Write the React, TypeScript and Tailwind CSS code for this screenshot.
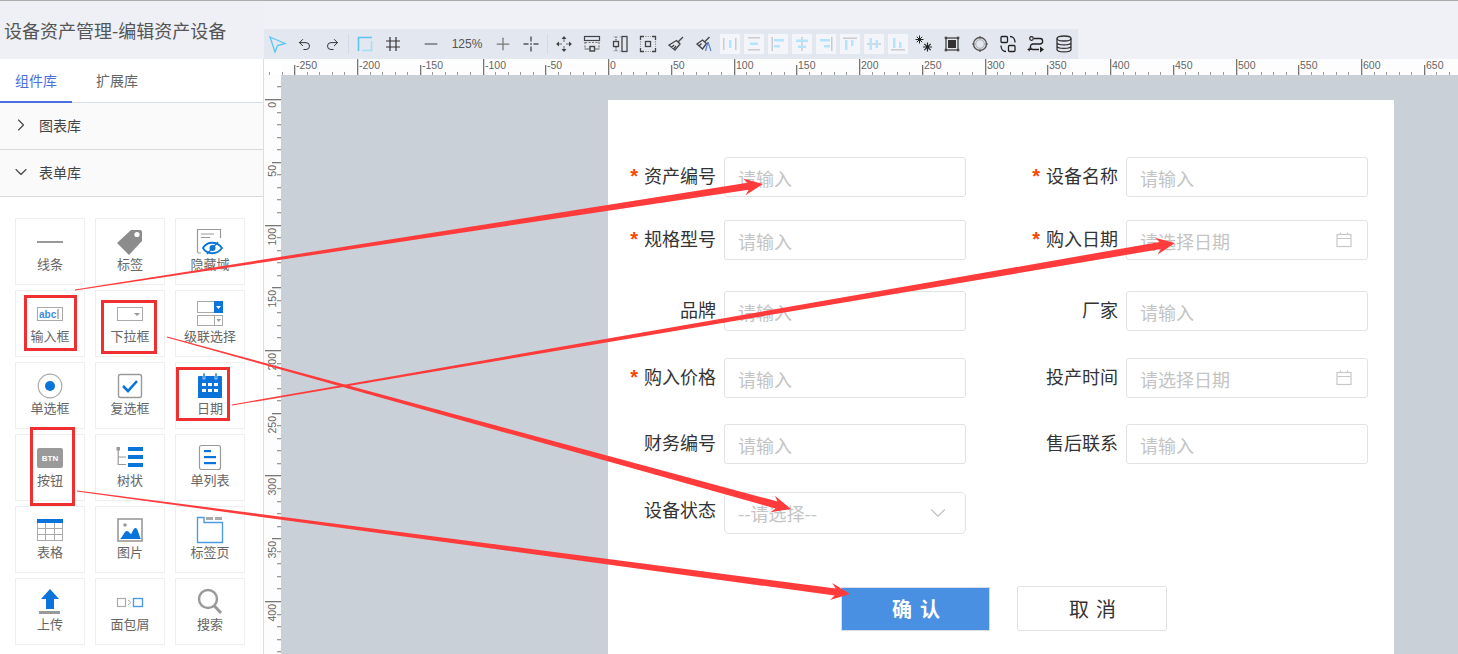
import type { ReactNode } from 'react'
import { ChevronDown, ChevronRight, Minus, Plus, Redo2, Undo2 } from 'lucide-react'

const FONT = '"Noto Sans CJK SC", "Liberation Sans", sans-serif'

function Tool({ children }: { children: ReactNode }) {
  return (
    <div className="w-7 h-full flex items-center justify-center shrink-0">
      <svg width="20" height="20" viewBox="0 0 20 20" fill="none" stroke="#444" strokeWidth="1.2">
        {children}
      </svg>
    </div>
  )
}

function Align({ children }: { children: ReactNode }) {
  return (
    <div className="w-6 h-full flex items-center justify-center shrink-0">
      <div className="w-5 h-5 bg-[#f3f5fa]">
        <svg width="20" height="20" viewBox="0 0 20 20">
          {children}
        </svg>
      </div>
    </div>
  )
}

function Sep() {
  return (
    <div className="w-[5px] h-full flex items-center justify-center shrink-0">
      <div className="w-px h-5 bg-[#d5d9e3]" />
    </div>
  )
}

function Toolbar() {
  const gray = '#ccc'
  const cyan = '#b5e5fb'
  return (
    <div className="w-[814px] h-[30px] bg-[#e3e7f0] flex items-center">
      <div className="w-[26px] h-full flex items-center justify-center shrink-0">
        <svg width="20" height="20" viewBox="0 0 20 20" fill="none">
          <path d="M3 3 L18 9.5 L10.5 11.5 L8 18 Z" stroke="#58c6f5" strokeWidth="1.3" />
        </svg>
      </div>
      <div className="w-7 h-full flex items-center justify-center shrink-0">
        <Undo2 size={15} color="#333" strokeWidth={1.6} />
      </div>
      <div className="w-7 h-full flex items-center justify-center shrink-0">
        <Redo2 size={15} color="#333" strokeWidth={1.6} />
      </div>
      <Sep />
      <Tool>
        <path d="M17 3.5 H3.5 V17" stroke="#5cc3f3" strokeWidth="1.6" />
        <path d="M16.5 7 V16.5 H7" stroke="#a5dcf7" strokeWidth="1.6" />
      </Tool>
      <Tool>
        <path d="M7 3 V17 M13 3 V17 M3 7 H17 M3 13 H17" stroke="#333" />
      </Tool>
      <div className="w-2.5 h-full shrink-0" />
      <div className="w-7 h-full flex items-center justify-center shrink-0">
        <Minus size={20} color="#777" strokeWidth={1.8} />
      </div>
      <div className="w-11 h-full flex items-center justify-center shrink-0 text-[12px] text-[#555] font-['Liberation_Sans']">125%</div>
      <div className="w-7 h-full flex items-center justify-center shrink-0">
        <Plus size={20} color="#777" strokeWidth={1.5} />
      </div>
      <Tool>
        <path d="M10 2.5 V7.5 M10 12.5 V17.5 M2.5 10 H7.5 M12.5 10 H17.5" stroke="#555" strokeWidth="1.4" />
        <rect x="9.2" y="9.2" width="1.6" height="1.6" fill="#555" stroke="none" />
      </Tool>
      <Sep />
      <Tool>
        <path d="M10 5 V8 M10 12 V15 M5 10 H8 M12 10 H15" stroke="#666" strokeWidth="1" />
        <path d="M10 2 L12.5 5 H7.5 Z M10 18 L12.5 15 H7.5 Z M2 10 L5 7.5 V12.5 Z M18 10 L15 7.5 V12.5 Z" fill="#444" stroke="none" />
      </Tool>
      <Tool>
        <rect x="2.5" y="2.5" width="15" height="4" />
        <path d="M3 8 V15 M17 8 V15 M3 8.5 H17" strokeDasharray="2 1.5" stroke="#777" />
        <rect x="8" y="12.5" width="4.5" height="4.5" strokeWidth="1.4" />
        <path d="M2.5 15 H8 M12 15 H17.5" stroke="#666" />
      </Tool>
      <Tool>
        <rect x="12" y="2.5" width="5" height="15" strokeWidth="1.3" />
        <rect x="3.5" y="7.5" width="5" height="5" strokeWidth="1.3" />
        <path d="M6 2.5 V7 M6 13 V17.5" strokeDasharray="1.5 1" stroke="#555" />
        <path d="M3.5 3 H11 M3.5 17 H11" strokeDasharray="1.5 1.5" stroke="#aaa" />
      </Tool>
      <Tool>
        <path d="M2.5 6 V2.5 H6 M14 2.5 H17.5 V6 M2.5 14 V17.5 H6 M14 17.5 H17.5 V14" strokeWidth="1.3" />
        <rect x="7.5" y="7.5" width="5" height="5" strokeWidth="1.3" />
        <path d="M7 2.5 H13 M7 17.5 H13 M2.5 7 V13 M17.5 7 V13" strokeDasharray="1.5 1" stroke="#999" />
      </Tool>
      <Tool>
        <path d="M17 3 L12 8 L14 9.5 M10.5 6.5 L14 10 L9 16 L3 11 Z M5.5 13.5 L8 11 M7.5 15 L10 12" stroke="#444" strokeWidth="1.3" />
      </Tool>
      <Tool>
        <path d="M15.5 3 L11 7.5 M8.5 6 L12.5 9.5 L8.5 15 L3 10 Z M5 12 L7.5 9.5" stroke="#444" strokeWidth="1.3" />
        <path d="M14 8 L11.5 17 M14 8 L17 17" stroke="#5a82e0" strokeWidth="1.2" />
      </Tool>
      <Align>
        <rect x="3" y="4" width="1.5" height="12" fill={gray} />
        <rect x="9" y="6" width="2.5" height="8" fill={cyan} />
        <rect x="15" y="4" width="1.5" height="12" fill={gray} />
      </Align>
      <Align>
        <rect x="4" y="3" width="12" height="1.5" fill={gray} />
        <rect x="6" y="8.5" width="8" height="2.5" fill={cyan} />
        <rect x="4" y="15" width="12" height="1.5" fill={gray} />
      </Align>
      <Align>
        <rect x="3.5" y="3" width="1.5" height="14" fill={gray} />
        <rect x="6" y="5" width="10" height="2.5" fill={cyan} />
        <rect x="6" y="11" width="6" height="2.5" fill={cyan} />
      </Align>
      <Align>
        <rect x="9.2" y="3" width="1.5" height="14" fill={gray} />
        <rect x="4" y="5.5" width="12" height="2.5" fill={cyan} />
        <rect x="6" y="11.5" width="8" height="2.5" fill={cyan} />
      </Align>
      <Align>
        <rect x="15" y="3" width="1.5" height="14" fill={gray} />
        <rect x="4" y="5" width="10" height="2.5" fill={cyan} />
        <rect x="8" y="11" width="6" height="2.5" fill={cyan} />
      </Align>
      <Align>
        <rect x="3" y="3.5" width="14" height="1.5" fill={gray} />
        <rect x="5" y="6" width="2.5" height="10" fill={cyan} />
        <rect x="11" y="6" width="2.5" height="6" fill={cyan} />
      </Align>
      <Align>
        <rect x="3" y="9.2" width="14" height="1.5" fill={gray} />
        <rect x="5.5" y="4" width="2.5" height="12" fill={cyan} />
        <rect x="11.5" y="6" width="2.5" height="8" fill={cyan} />
      </Align>
      <Align>
        <rect x="3" y="15" width="14" height="1.5" fill={gray} />
        <rect x="5" y="4" width="2.5" height="10" fill={cyan} />
        <rect x="11" y="8" width="2.5" height="6" fill={cyan} />
      </Align>
      <Tool>
        <path d="M1.5 5.5 H9.5 M5.5 1.5 V9.5 M2.8 2.8 L8.2 8.2 M8.2 2.8 L2.8 8.2" stroke="#222" strokeWidth="1" />
        <path d="M9 13 H18 M13.5 8.5 V17.5 M10.3 9.8 L16.7 16.2 M16.7 9.8 L10.3 16.2" stroke="#222" strokeWidth="1.2" />
      </Tool>
      <Tool>
        <rect x="4" y="4" width="12" height="12" stroke="#444" strokeWidth="1.3" />
        <rect x="6" y="6" width="8" height="8" fill="#333" stroke="none" />
        <rect x="2.7" y="2.7" width="2.4" height="2.4" fill="#444" stroke="none" />
        <rect x="14.9" y="2.7" width="2.4" height="2.4" fill="#444" stroke="none" />
        <rect x="2.7" y="14.9" width="2.4" height="2.4" fill="#444" stroke="none" />
        <rect x="14.9" y="14.9" width="2.4" height="2.4" fill="#444" stroke="none" />
      </Tool>
      <Tool>
        <circle cx="10" cy="10" r="6.5" stroke="#555" strokeWidth="1.4" />
        <circle cx="10" cy="10" r="4.3" stroke="#aaa" strokeWidth="1" />
        <path d="M10 2 V4.5 M10 15.5 V18 M2 10 H4.5 M15.5 10 H18" stroke="#555" />
      </Tool>
      <Tool>
        <rect x="3" y="2.5" width="6.5" height="6" rx="1" stroke="#222" strokeWidth="1.3" />
        <rect x="10.5" y="11.5" width="6.5" height="6" rx="1" stroke="#222" strokeWidth="1.3" />
        <path d="M12 2.5 C15 2.5 17 5 17 8.5 M8 17.5 C5 17.5 3 15 3 11.5" stroke="#222" strokeWidth="1.3" />
      </Tool>
      <Tool>
        <circle cx="5.5" cy="4.5" r="1.8" stroke="#222" strokeWidth="1.2" />
        <path d="M8 4.5 H14 C17.5 4.5 17.5 10 14 10 H7 C3.5 10 3.5 15.5 7 15.5 H13" stroke="#222" strokeWidth="1.3" />
        <path d="M1.5 15.5 H5 M3.2 13.8 V17.2" stroke="#222" strokeWidth="1.2" />
        <path d="M14 12.5 L18 15.5 L14 18.5 Z" fill="#222" stroke="none" />
      </Tool>
      <Tool>
        <ellipse cx="10" cy="4.5" rx="7" ry="2.5" stroke="#333" strokeWidth="1.3" />
        <path d="M3 4.5 V15.5 C3 18.7 17 18.7 17 15.5 V4.5 M3 8.5 C3 11.7 17 11.7 17 8.5 M3 12 C3 15.2 17 15.2 17 12" stroke="#333" strokeWidth="1.3" />
      </Tool>
    </div>
  )
}

function TopRuler() {
  const ticks = []
  for (let v = -270; v <= 680; v += 10) {
    const x = Math.round(608 + v * 1.255) - 264
    const long = v % 100 === 0
    const mid = v % 50 === 0
    const h = long ? 16 : mid ? 10 : 3
    ticks.push(<rect key={v} x={x} y={16 - h} width={long || mid ? 1.3 : 1} height={h} fill={long || mid ? '#777' : '#999'} />)
    if (mid && x > 17) {
      ticks.push(
        <text key={`t${v}`} x={x + 2} y={10} fontSize="10.5" fill="#666" fontFamily="Liberation Sans, sans-serif">
          {v}
        </text>,
      )
    }
  }
  return (
    <svg width="1194" height="16" className="block bg-[#fdfdfd]">
      <rect x="0" y="0" width="17" height="16" fill="#fff" />
      {ticks}
    </svg>
  )
}

function LeftRuler() {
  const ticks = []
  for (let v = -10; v <= 440; v += 10) {
    const y = Math.round(25 + v * 1.255) - 1
    const long = v % 100 === 0
    const mid = v % 50 === 0
    const w = long ? 16 : mid ? 9 : 4
    ticks.push(<rect key={v} x={17 - w} y={y} width={w} height={1.3} fill={long || mid ? '#777' : '#999'} />)
    if (mid && v >= 0) {
      ticks.push(
        <text
          key={`t${v}`}
          x={0}
          y={0}
          fontSize="10.5"
          fill="#666"
          fontFamily="Liberation Sans, sans-serif"
          textAnchor="end"
          transform={`translate(12 ${y + 3}) rotate(-90)`}
        >
          {v}
        </text>,
      )
    }
  }
  return (
    <svg width="17" height="579" className="block shrink-0 bg-[#fdfdfd]">
      {ticks}
    </svg>
  )
}

const items: { label: string; icon: ReactNode }[] = [
  { label: '线条', icon: <rect x="1" y="13" width="26" height="2" fill="#999" /> },
  {
    label: '标签',
    icon: (
      <>
        <path d="M15 2 H24 A2 2 0 0 1 26 4 V13 L13 27 L1 15 Z" fill="#8c8c8c" />
        <circle cx="21" cy="6.5" r="2.6" fill="#fff" />
      </>
    ),
  },
  {
    label: '隐藏域',
    icon: (
      <>
        <path d="M5 25 H3 A1.5 1.5 0 0 1 1.5 23.5 V1.5 H24.5 V10" fill="none" stroke="#999" strokeWidth="1.2" />
        <path d="M5 6 H18 M5 9.5 H14" stroke="#999" />
        <path d="M7 20 C11 13 21 13 26 20 C21 27 11 27 7 20 Z" fill="#fff" stroke="#0a74da" strokeWidth="1.8" />
        <circle cx="16.5" cy="20" r="3" fill="#0a74da" />
        <path d="M11 26 L22 14" stroke="#0a74da" strokeWidth="1.2" />
      </>
    ),
  },
  {
    label: '输入框',
    icon: (
      <>
        <rect x="1.5" y="7.5" width="25" height="13" fill="#fff" stroke="#aaa" />
        <text x="3" y="18" fontSize="10" fontWeight="700" fill="#3b8de0" fontFamily="Liberation Sans, sans-serif">
          abc
        </text>
        <rect x="21" y="9" width="2" height="10" fill="#bbb" />
      </>
    ),
  },
  {
    label: '下拉框',
    icon: (
      <>
        <rect x="1.5" y="7.5" width="25" height="13" fill="#fff" stroke="#aaa" />
        <path d="M18 13 H24 L21 16 Z" fill="#999" />
      </>
    ),
  },
  {
    label: '级联选择',
    icon: (
      <>
        <rect x="1.5" y="1.5" width="25" height="11" fill="#fff" stroke="#aaa" />
        <rect x="18" y="1" width="9" height="12" fill="#0a74da" />
        <path d="M20 6 H25 L22.5 9 Z" fill="#fff" />
        <rect x="1.5" y="15.5" width="25" height="10" fill="#fff" stroke="#aaa" />
        <path d="M18.5 15.5 V25.5" stroke="#aaa" />
        <path d="M20.5 19 H25 L22.7 22 Z" fill="#999" />
      </>
    ),
  },
  {
    label: '单选框',
    icon: (
      <>
        <circle cx="14" cy="14" r="11.8" fill="#fff" stroke="#aaa" strokeWidth="1.2" />
        <circle cx="14" cy="14" r="5" fill="#0a74da" />
      </>
    ),
  },
  {
    label: '复选框',
    icon: (
      <>
        <rect x="2.5" y="2.5" width="23" height="23" rx="2" fill="#fff" stroke="#999" strokeWidth="1.4" />
        <path d="M7 14 L12 19 L21 9" fill="none" stroke="#0a74da" strokeWidth="2.6" />
      </>
    ),
  },
  {
    label: '日期',
    icon: (
      <>
        <path d="M3 4 H25 A1 1 0 0 1 26 5 V26 H2 V5 A1 1 0 0 1 3 4 Z" fill="#0a74da" />
        <rect x="7" y="1" width="2" height="6" fill="#0a74da" stroke="#fff" strokeWidth="0.6" />
        <rect x="19" y="1" width="2" height="6" fill="#0a74da" stroke="#fff" strokeWidth="0.6" />
        <path d="M6 11 h4 v3 h-4 z M12 11 h4 v3 h-4 z M18 11 h4 v3 h-4 z M6 17 h4 v3 h-4 z M12 17 h4 v3 h-4 z M18 17 h4 v3 h-4 z" fill="#fff" />
      </>
    ),
  },
  {
    label: '按钮',
    icon: (
      <>
        <rect x="1" y="4" width="26" height="20" rx="2" fill="#9a9a9a" />
        <text x="14" y="17" fontSize="8" fontWeight="700" textAnchor="middle" fill="#fff" fontFamily="Liberation Sans, sans-serif">
          BTN
        </text>
      </>
    ),
  },
  {
    label: '树状',
    icon: (
      <>
        <rect x="0.5" y="3" width="3.5" height="3.5" fill="#999" />
        <path d="M2.2 6 V21 M2.2 13 H10 M2.2 20.5 H10" stroke="#999" strokeWidth="1.2" fill="none" />
        <rect x="12" y="3" width="15" height="4" fill="#0a74da" />
        <rect x="12" y="11" width="15" height="4" fill="#0a74da" />
        <rect x="12" y="19" width="15" height="4" fill="#0a74da" />
      </>
    ),
  },
  {
    label: '单列表',
    icon: (
      <>
        <rect x="3.5" y="1.5" width="21" height="24" rx="2" fill="#fff" stroke="#999" strokeWidth="1.2" />
        <rect x="8" y="6" width="7" height="2.2" fill="#0a74da" />
        <rect x="8" y="12" width="12" height="2.2" fill="#0a74da" />
        <rect x="8" y="18" width="12" height="2.2" fill="#0a74da" />
      </>
    ),
  },
  {
    label: '表格',
    icon: (
      <>
        <rect x="1.5" y="3.5" width="25" height="21" fill="#fff" stroke="#aaa" />
        <rect x="1" y="3" width="26" height="4" fill="#0a74da" />
        <path d="M1.5 12.5 H26.5 M1.5 18.5 H26.5 M9.5 7 V24.5 M18.5 7 V24.5" stroke="#aaa" />
      </>
    ),
  },
  {
    label: '图片',
    icon: (
      <>
        <rect x="2" y="3" width="24" height="22" fill="#fff" stroke="#999" strokeWidth="1.6" />
        <circle cx="9" cy="9" r="1.8" fill="#999" />
        <path d="M4 23 C7 21 8 15 11 15 C13 15 14 18 15 18 C16 18 17 12 19.5 12 C22 12 23 20 25 23 Z" fill="#0a74da" />
      </>
    ),
  },
  {
    label: '标签页',
    icon: (
      <>
        <path d="M1.5 1.5 H8 V6.5 H26.5 V26.5 H1.5 Z" fill="#fff" stroke="#4d9be6" strokeWidth="1.4" />
        <rect x="10" y="1" width="7" height="3" fill="#aaa" />
        <rect x="19" y="1" width="7" height="3" fill="#aaa" />
      </>
    ),
  },
  {
    label: '上传',
    icon: (
      <>
        <path d="M14 1 L23 11 H18 V21 H10 V11 H5 Z" fill="#0a74da" />
        <rect x="3" y="23" width="21" height="3" fill="#999" />
      </>
    ),
  },
  {
    label: '面包屑',
    icon: (
      <>
        <rect x="1.5" y="10.5" width="8" height="8" fill="#fff" stroke="#aaa" strokeWidth="1.2" />
        <path d="M12 12 L15 14.5 L12 17" fill="none" stroke="#aaa" />
        <rect x="17.5" y="10.5" width="9" height="8" fill="#fff" stroke="#4d9be6" strokeWidth="1.4" />
      </>
    ),
  },
  {
    label: '搜索',
    icon: (
      <>
        <circle cx="12" cy="11" r="9" fill="none" stroke="#999" strokeWidth="2.4" />
        <path d="M18.5 18 L25 25" stroke="#999" strokeWidth="3" />
      </>
    ),
  },
]

function Sidebar() {
  return (
    <div className="w-[264px] shrink-0 flex flex-col bg-white border-r border-[#dcdee3]">
      <div className="h-[58px] bg-[#eef0f5] -mr-px flex items-center pl-1 text-[18px] text-[#555]">
        设备资产管理-编辑资产设备
      </div>
      <div className="h-[44px] flex border-b border-[#d8dce6] text-[14px]">
        <div className="w-[72px] h-[44px] border-b-2 border-[#4a6ee0] text-[#4a6ee0] text-center pt-[11px] leading-[20px]">组件库</div>
        <div className="ml-6 pt-[11px] leading-[20px] text-[#666]">扩展库</div>
      </div>
      <div className="h-[47px] flex items-center bg-[#fafafa] border-b border-[#d8d8dd] text-[14px] text-[#444] pl-[11px] pb-[2px]">
        <ChevronRight size={20} color="#444" strokeWidth={1.3} />
        <span className="ml-2">图表库</span>
      </div>
      <div className="h-[47px] flex items-center bg-[#fafafa] border-b border-[#d8d8dd] text-[14px] text-[#444] pl-[11px] pb-[2px]">
        <ChevronDown size={20} color="#444" strokeWidth={1.3} />
        <span className="ml-2">表单库</span>
      </div>
      <div className="grid grid-cols-[70px_70px_70px] auto-rows-[67px] gap-x-[10px] gap-y-[5px] pl-[15px] pt-[21px]">
        {items.map((item) => (
          <div key={item.label} className="border border-[#eeeeee] flex flex-col items-center pt-[9px] bg-white">
            <svg width="28" height="28" viewBox="0 0 28 28" className="shrink-0">
              {item.icon}
            </svg>
            <span className="text-[13px] leading-[20px] -mt-[2px] text-[#666] whitespace-nowrap">{item.label}</span>
          </div>
        ))}
      </div>
    </div>
  )
}

function Field({ label, required, labelW, placeholder, date }: { label?: string; required?: boolean; labelW: string; placeholder?: string; date?: boolean }) {
  return (
    <div className="flex items-center h-10">
      <div className={`${labelW} flex justify-end items-center text-[18px] text-[#333] -mt-[3px]`}>
        {required && <span className="text-[#f40] mr-[6px] mt-[1px] text-[20px] leading-none font-bold font-['Liberation_Sans']">*</span>}
        {label}
      </div>
      <div className="ml-2 w-[242px] h-10 border border-[#e2e2e2] rounded-[3px] flex items-center justify-between pl-[13px] pr-[15px] pt-[2px] text-[18px] text-[#c4c4c4]">
        {placeholder}
        {date && (
          <svg width="16" height="16" viewBox="0 0 16 16" fill="none" stroke="#c8c8c8" strokeWidth="1.2" className="-mt-[2px]">
            <rect x="1" y="2.5" width="14" height="12" />
            <path d="M1 6.5 H15 M4.5 0.5 V3 M11.5 0.5 V3" />
          </svg>
        )}
      </div>
    </div>
  )
}

function Page() {
  return (
    <div className="ml-[327px] mt-[25px] w-[786px] h-[600px] bg-white pt-[57px] shrink-0">
      <div className="flex">
        <Field required label="资产编号" labelW="w-[108px]" placeholder="请输入" />
        <Field required label="设备名称" labelW="w-[152px]" placeholder="请输入" />
      </div>
      <div className="flex mt-[23px]">
        <Field required label="规格型号" labelW="w-[108px]" placeholder="请输入" />
        <Field required label="购入日期" labelW="w-[152px]" placeholder="请选择日期" date />
      </div>
      <div className="flex mt-[31px]">
        <Field label="品牌" labelW="w-[108px]" placeholder="请输入" />
        <Field label="厂家" labelW="w-[152px]" placeholder="请输入" />
      </div>
      <div className="flex mt-[27px]">
        <Field required label="购入价格" labelW="w-[108px]" placeholder="请输入" />
        <Field label="投产时间" labelW="w-[152px]" placeholder="请选择日期" date />
      </div>
      <div className="flex mt-[26px]">
        <Field label="财务编号" labelW="w-[108px]" placeholder="请输入" />
        <Field label="售后联系" labelW="w-[152px]" placeholder="请输入" />
      </div>
      <div className="flex items-center mt-[28px]">
        <div className="w-[108px] text-right text-[18px] text-[#333] -mt-[7px]">设备状态</div>
        <div className="ml-2 w-[242px] h-[42px] border border-[#e2e2e2] rounded-[5px] flex items-center justify-between pl-[13px] pr-[14px] text-[18px] text-[#c4c4c4]">
          --请选择--
          <ChevronDown size={26} color="#c0c0c0" strokeWidth={1} />
        </div>
      </div>
      <div className="flex items-start mt-[52px] pl-[233px]">
        <div className="mt-px w-[149px] h-[44px] bg-[#4a90e2] border border-[#d8dde6] flex items-center justify-center pl-[9px] text-white text-[20px] font-bold tracking-[8px]">
          确认
        </div>
        <div className="ml-[27px] w-[150px] h-[45px] bg-white border border-[#e2e2e2] rounded-[2px] flex items-center justify-center pl-[8px] text-[#333] text-[20px] tracking-[7px]">
          取消
        </div>
      </div>
    </div>
  )
}

function Arrow({ x1, y1, x2, y2 }: { x1: number; y1: number; x2: number; y2: number }) {
  const len = Math.hypot(x2 - x1, y2 - y1)
  const dx = (x2 - x1) / len
  const dy = (y2 - y1) / len
  const nx = -dy
  const ny = dx
  const p = (along: number, off: number) => `${x2 - dx * along + nx * off},${y2 - dy * along + ny * off}`
  const points = [
    `${x1 + nx * 0.6},${y1 + ny * 0.6}`,
    p(15, 3.6),
    p(19, 8.5),
    p(0, 0),
    p(19, -8.5),
    p(15, -3.6),
    `${x1 - nx * 0.6},${y1 - ny * 0.6}`,
  ].join(' ')
  return <polygon points={points} fill="#ff3b3b" />
}

export default function App() {
  return (
    <div className="relative w-[1458px] h-[654px] overflow-hidden bg-white" style={{ fontFamily: FONT }}>
      <div className="h-px bg-[#aaaaaa]" />
      <div className="flex h-[653px]">
        <Sidebar />
        <div className="flex-1 flex flex-col min-w-0">
          <div className="h-[58px] bg-[#f0f1f6] pt-[28px]">
            <Toolbar />
          </div>
          <TopRuler />
          <div className="flex flex-1 min-h-0">
            <LeftRuler />
            <div className="flex-1 bg-[#c9d0d7] overflow-hidden">
              <Page />
            </div>
          </div>
        </div>
      </div>

      <div className="absolute left-[24px] top-[295px] w-[53px] h-[56px] border-[3px] border-[#f03030]" />
      <div className="absolute left-[101px] top-[300px] w-[56px] h-[54px] border-[3px] border-[#f03030]" />
      <div className="absolute left-[176px] top-[367px] w-[54px] h-[54px] border-[3px] border-[#f03030]" />
      <div className="absolute left-[30px] top-[427px] w-[45px] h-[79px] border-[3px] border-[#f03030]" />

      <svg width="1458" height="654" className="absolute left-0 top-0 pointer-events-none">
        <Arrow x1={75} y1={290} x2={763} y2={184} />
        <Arrow x1={232} y1={405} x2={1175} y2={243} />
        <Arrow x1={167} y1={337} x2={791} y2={509} />
        <Arrow x1={77} y1={491} x2={850} y2={594} />
      </svg>
    </div>
  )
}
